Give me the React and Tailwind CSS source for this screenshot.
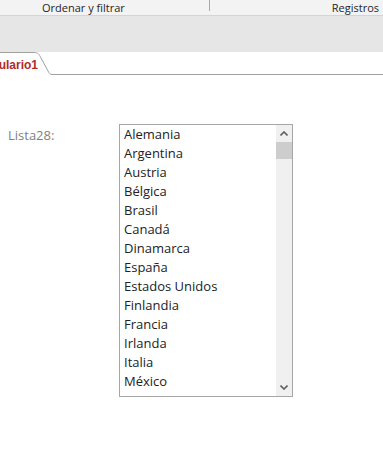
import React from 'react';

const paises = [
  'Alemania', 'Argentina', 'Austria', 'Bélgica', 'Brasil', 'Canadá', 'Dinamarca',
  'España', 'Estados Unidos', 'Finlandia', 'Francia', 'Irlanda', 'Italia', 'México',
];

const ui = { fontFamily: '"Segoe UI", "Open Sans", "Noto Sans", sans-serif' };

export default function App() {
  return (
    <div className="w-[383px] h-[472px] bg-white overflow-hidden" style={ui}>
      {/* ribbon group labels */}
      <div className="flex h-[16px] bg-[#f3f3f3] border-b border-[#d4d4d4] text-[11px] leading-[15px] text-[#262626]">
        <div className="w-[210px] pl-[42px] relative">
          <span>Ordenar y filtrar</span>
          <span className="absolute right-0 top-0 w-px h-[11px] bg-[#a8a8a8]" />
        </div>
        <div className="flex-1 flex justify-end pr-[4px]">
          <span>Registros</span>
        </div>
      </div>
      <div className="h-[36px] bg-[#e6e6e6]" />

      {/* object tab */}
      <div className="flex h-[23px] items-end">
        <div className="relative w-[52px] h-[23px] overflow-hidden">
          <svg className="absolute inset-0" width="52" height="23" viewBox="0 0 52 23">
            <path d="M0 0.5 H34 C38 0.5 39 2 41 6 L48 19 C49 21 50 22.5 52 22.5" fill="none" stroke="#a0a0a0" strokeWidth="1" />
          </svg>
          <span
            className="absolute top-[4px] right-[14px] whitespace-nowrap text-[12px] font-bold text-[#b22b1f]"
            style={{ fontFamily: '"Liberation Sans", Arial, sans-serif' }}
          >
            Formulario1
          </span>
        </div>
        <div className="flex-1 border-b border-[#a0a0a0]" />
      </div>

      {/* form body */}
      <div className="flex pt-[49px]">
        <div className="w-[119px] pl-[8px] pt-[2px] text-[13px] leading-[18px] text-[#7f7f7f]">Lista28:</div>
        <div className="flex w-[174px] h-[273px] border border-[#a6a6a6] bg-white">
          <ul className="flex-1 pl-[4px] text-[13px] leading-[19px] text-[#222222]">
            {paises.map((p) => (
              <li key={p}>{p}</li>
            ))}
          </ul>
          <div className="w-[16px] bg-[#f0f0f0] flex flex-col">
            <div className="h-[17px] flex items-center justify-center">
              <svg width="8" height="5" viewBox="0 0 8 5">
                <path d="M0.5 4.5 L4 1 L7.5 4.5" fill="none" stroke="#606060" strokeWidth="1.6" />
              </svg>
            </div>
            <div className="h-[17px] bg-[#cdcdcd]" />
            <div className="flex-1" />
            <div className="h-[17px] flex items-center justify-center">
              <svg width="8" height="5" viewBox="0 0 8 5">
                <path d="M0.5 0.5 L4 4 L7.5 0.5" fill="none" stroke="#606060" strokeWidth="1.6" />
              </svg>
            </div>
          </div>
        </div>
      </div>
    </div>
  );
}
